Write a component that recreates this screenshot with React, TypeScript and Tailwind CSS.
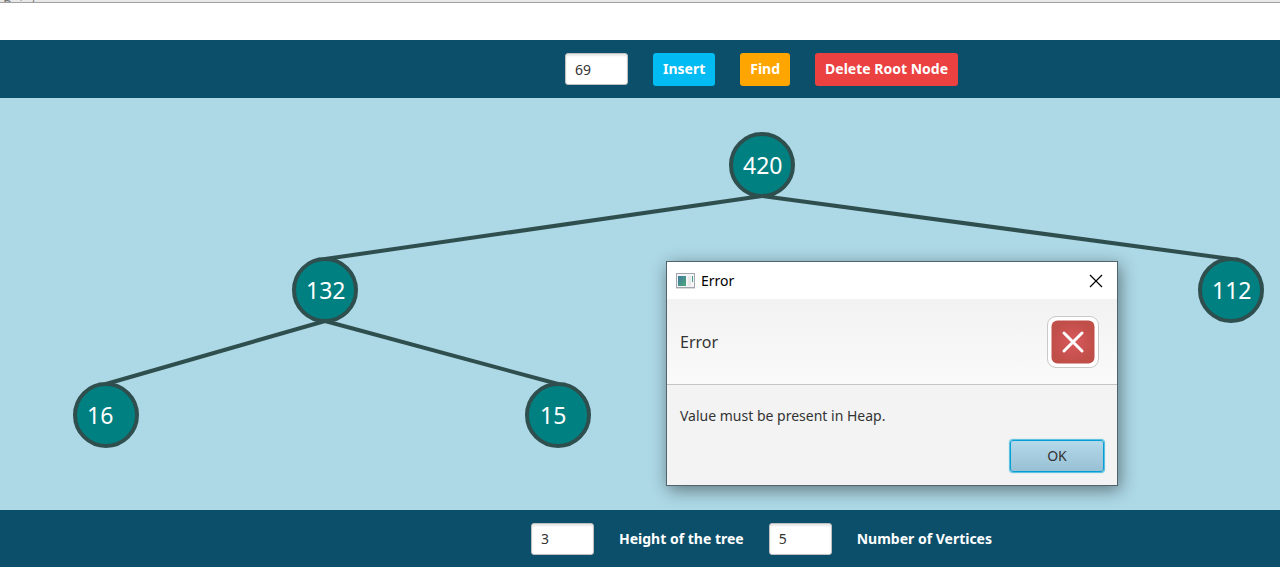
import { useState } from "react";

const nodes = [
  { value: 420, x: 762, y: 165, tx: 743 },
  { value: 132, x: 325, y: 290, tx: 306 },
  { value: 112, x: 1231, y: 290, tx: 1212 },
  { value: 16, x: 106, y: 415, tx: 87 },
  { value: 15, x: 558, y: 415, tx: 540 },
];

const edges = [
  [0, 1],
  [0, 2],
  [1, 3],
  [1, 4],
];

const CANVAS_TOP = 98;

const field =
  "h-8 w-[63px] rounded-[3px] border border-[#c0c0c0] bg-white px-[9px] text-[14px] text-[#333] shadow-[inset_0_2px_2px_#e8e8e8] outline-none";
const action =
  "h-[33px] rounded-[3px] px-2.5 pb-0.5 text-[14px] font-bold text-white";

function Tree() {
  return (
    <svg className="absolute top-0 left-0 h-full w-full" role="img" aria-label="Heap tree">
      {edges.map(([a, b]) => (
        <line
          key={`${a}-${b}`}
          x1={nodes[a].x}
          y1={nodes[a].y + 31 - CANVAS_TOP}
          x2={nodes[b].x}
          y2={nodes[b].y - 31 - CANVAS_TOP}
          stroke="#2f4f4f"
          strokeWidth={4}
        />
      ))}
      {nodes.map((n) => (
        <g key={n.value}>
          <circle
            cx={n.x}
            cy={n.y - CANVAS_TOP}
            r={31}
            fill="#008080"
            stroke="#2f4f4f"
            strokeWidth={4}
          />
          <text x={n.tx} y={n.y + 9 - CANVAS_TOP} fill="white" fontSize={23}>
            {n.value}
          </text>
        </g>
      ))}
    </svg>
  );
}

function WindowIcon() {
  return (
    <svg width="19" height="16" viewBox="0 0 19 16" aria-hidden="true">
      <defs>
        <linearGradient id="pane" x1="0" y1="0" x2="1" y2="1">
          <stop offset="0" stopColor="#3f7aa0" />
          <stop offset="1" stopColor="#4fa878" />
        </linearGradient>
      </defs>
      <rect x="0.5" y="0.5" width="18" height="14" fill="#f4f4f6" stroke="#a3a5ae" />
      <rect x="0" y="15" width="19" height="1" fill="#dcdcdc" />
      <rect x="2" y="3" width="8" height="10" fill="url(#pane)" />
      <rect x="12" y="3" width="3" height="10" fill="#e9e9e9" />
      <rect x="16" y="3" width="1" height="6" fill="#4c9b8c" />
    </svg>
  );
}

function ErrorIcon() {
  return (
    <svg width="52" height="52" viewBox="0 0 52 52" aria-hidden="true">
      <defs>
        <radialGradient id="red">
          <stop offset="0" stopColor="#d9595b" />
          <stop offset="1" stopColor="#c04e49" />
        </radialGradient>
      </defs>
      <rect x="0.5" y="0.5" width="51" height="51" rx="8.5" fill="white" stroke="#c9c9c9" />
      <rect x="4.5" y="4.5" width="43" height="43" rx="6" fill="url(#red)" />
      <path d="M17 17L35 35M35 17L17 35" stroke="white" strokeWidth="3" strokeLinecap="round" />
    </svg>
  );
}

function ErrorDialog({ onClose }: { onClose: () => void }) {
  return (
    <div
      role="dialog"
      aria-labelledby="dialog-title"
      className="absolute top-[163px] left-[666px] w-[452px] border border-[#4f646c] bg-[#f3f3f3] text-[#333] shadow-[2px_4px_16px_rgba(0,0,0,0.45)]"
    >
      <div className="flex h-[37px] items-center bg-white pr-[14px] pl-[9px] text-black">
        <WindowIcon />
        <span id="dialog-title" className="ml-1.5 text-[14px]">
          Error
        </span>
        <button aria-label="Close" onClick={onClose} className="ml-auto">
          <svg width="14" height="14" viewBox="0 0 14 14" aria-hidden="true">
            <path d="M1 1L13 13M13 1L1 13" stroke="black" strokeWidth="1.2" />
          </svg>
        </button>
      </div>
      <div className="flex h-[86px] items-center justify-between border-b border-[#c4c4c4] bg-linear-to-b from-[#f2f2f2] to-[#fafafa] pr-[18px] pl-[13px]">
        <h2 className="text-[16px]">Error</h2>
        <ErrorIcon />
      </div>
      <p className="px-[13px] pt-5 text-[14px] leading-[22px]">Value must be present in Heap.</p>
      <div className="flex justify-end px-[13px] py-[13px]">
        <button
          onClick={onClose}
          className="h-8 w-[94px] rounded-[3px] border border-[#039ed3] bg-linear-to-b from-[#b3d9ea] to-[#98c0d4] pb-0.5 text-[14px] shadow-[0_0_1px_1px_#4fbce0]"
        >
          OK
        </button>
      </div>
    </div>
  );
}

export default function App() {
  const [value, setValue] = useState("69");
  const [open, setOpen] = useState(true);

  return (
    <div className="flex min-h-screen flex-col overflow-hidden bg-white font-['Noto_Sans',sans-serif]">
      <div className="h-[3px] overflow-hidden border-b border-[#a0a0a0] bg-[#e8e8e8] pl-[3px] text-[14px] leading-[10px] text-[#777]">
        Paint
      </div>
      <div className="h-[37px]" />
      <header className="flex h-[58px] items-center justify-center gap-[25px] bg-[#0c4f6b] pl-[243px]">
        <input
          aria-label="Value"
          className={field}
          value={value}
          onChange={(e) => setValue(e.target.value)}
        />
        <button className={`${action} bg-[#03bbf3]`}>Insert</button>
        <button className={`${action} bg-[#ffa500]`} onClick={() => setOpen(true)}>
          Find
        </button>
        <button className={`${action} bg-[#eb4141]`}>Delete Root Node</button>
      </header>
      <main className="relative min-h-[412px] grow bg-[#add8e6]">
        <Tree />
        {open && <ErrorDialog onClose={() => setOpen(false)} />}
      </main>
      <footer className="flex h-[57px] items-center justify-center gap-[25px] bg-[#0c4f6b] pl-[243px] text-[14px] font-bold text-white">
        <input id="height" className={`${field} font-normal`} readOnly value="3" />
        <label htmlFor="height">Height of the tree</label>
        <input id="vertices" className={`${field} font-normal`} readOnly value="5" />
        <label htmlFor="vertices">Number of Vertices</label>
      </footer>
    </div>
  );
}
